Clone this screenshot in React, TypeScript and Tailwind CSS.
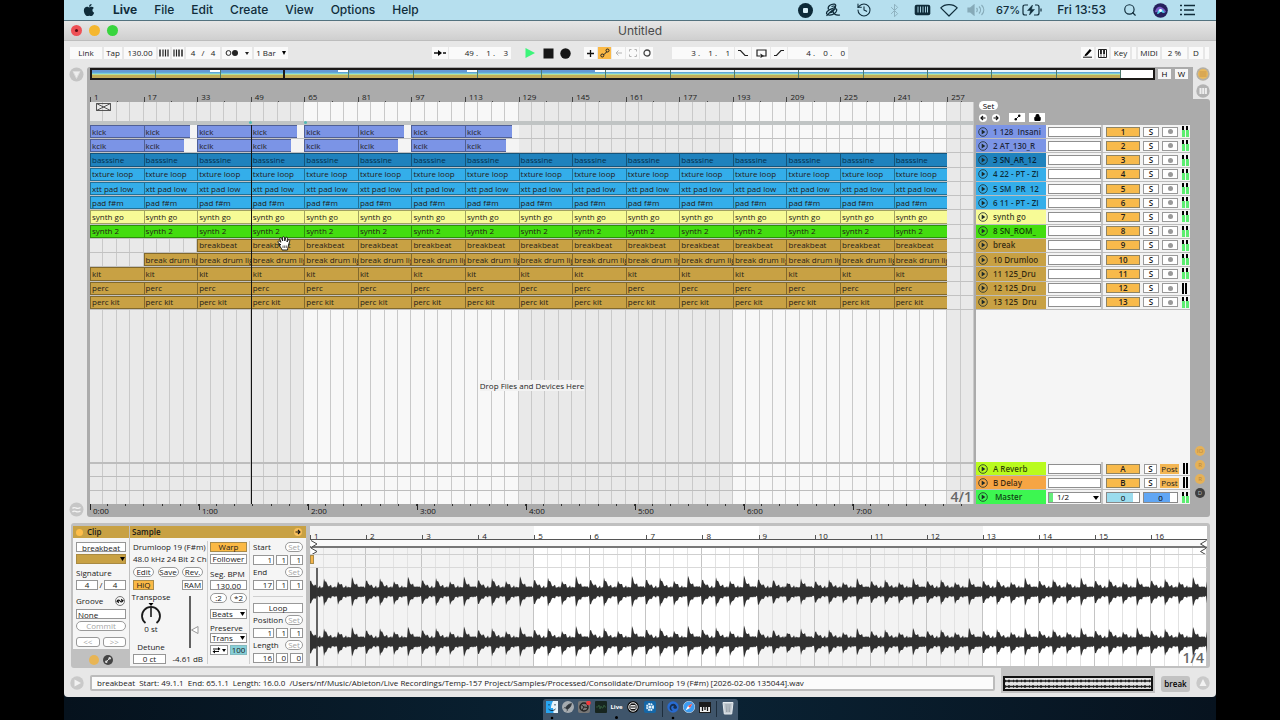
import React from "react";
import { FaApple } from "react-icons/fa";
import { History, Bluetooth, Search, Lock } from "lucide-react";

const BLUE = "bg-[#7b94e6]";
const TAN = "bg-[#c8a144]";
const SKY = "bg-[#34aeea]";

type Track = {
  header: string;
  color: string;
  clip: string;
  first: number;
  count: number;
  text?: string;
  shortBy?: number;
  idle?: boolean;
};

const tracks: Track[] = [
  { header: "1 128  Insani", color: BLUE, clip: "kick", first: 0, count: 8, shortBy: 1 },
  { header: "2 AT_130_R", color: BLUE, clip: "kcik", first: 0, count: 8, shortBy: 2 },
  { header: "3 SN_AR_12", color: "bg-[#1f82bd]", clip: "basssine", first: 0, count: 16, text: "text-[#06304d]" },
  { header: "4 22 - PT - ZI", color: SKY, clip: "txture loop", first: 0, count: 16 },
  { header: "5 SM  PR  12", color: SKY, clip: "xtt pad low", first: 0, count: 16 },
  { header: "6 11 - PT - ZI", color: SKY, clip: "pad f#m", first: 0, count: 16 },
  { header: "synth go", color: "bg-[#f7fb96]", clip: "synth go", first: 0, count: 16 },
  { header: "8 SN_ROM_", color: "bg-[#43dd0f]", clip: "synth 2", first: 0, count: 16 },
  { header: "break", color: TAN, clip: "breakbeat", first: 2, count: 14 },
  { header: "10 Drumloo", color: TAN, clip: "break drum lig", first: 1, count: 15 },
  { header: "11 125_Dru", color: TAN, clip: "kit", first: 0, count: 16 },
  { header: "12 125_Dru", color: TAN, clip: "perc", first: 0, count: 16, idle: true },
  { header: "13 125  Dru", color: TAN, clip: "perc kit", first: 0, count: 16 },
];

const range = (n: number) => Array.from({ length: n }, (_, i) => i);

function wavePath(width: number, bars: number, center: number): string {
  const up: string[] = [];
  const down: string[] = [];
  const peaks = [11, 12, 9, 13];
  const dips = [12, 13, 12, 13];
  const beat = width / bars / 4;
  for (let x = 0; x <= width; x += 1) {
    const phase = (x + 0.5) % beat;
    const index = Math.floor((x + 0.5) / beat) % 4;
    const local = Math.floor((x + 0.5) % (beat * 4));
    const bump = Math.abs(Math.sin(local * 2.3) * 2.2 + Math.sin(local * 1.1) * 1.2);
    const decay = Math.exp(-phase / 3.4);
    const top = 3 + bump + decay * (peaks[index] - 2);
    const low = 3 + bump * 0.7 + decay * (dips[index] - 2);
    up.push(`${x} ${(center - top).toFixed(1)}`);
    down.unshift(`${x} ${(center + low).toFixed(1)}`);
  }
  return `M${up.join("L")}L${down.join("L")}Z`;
}

const waveA = wavePath(897, 16, 24);
const waveB = wavePath(897, 16, 74);

function BarGrid() {
  return (
    <div className="absolute inset-0 grid grid-cols-[repeat(66,minmax(0,1fr))]" aria-hidden="true">
      {range(66).map((i) => (
        <div
          key={i}
          className={`border-r border-[#c9c9c9] ${Math.floor(i / 16) % 2 === 0 ? "bg-[#e9e9e9]" : "bg-[#f8f8f8]"}`}
        />
      ))}
    </div>
  );
}

function ToolBox({ className = "", label, children }: { className?: string; label?: string; children?: React.ReactNode }) {
  return (
    <button
      type="button"
      aria-label={label}
      className={`flex h-3 shrink-0 items-center justify-center whitespace-pre bg-[#fafafa] leading-none ${className}`}
    >
      {children}
    </button>
  );
}

function MenuBar() {
  return (
    <header className="flex h-[21px] items-center border-b border-[#53727f] bg-[#b6dfee] pl-[18px] pr-5 font-['Inter','Liberation_Sans',sans-serif] text-[12px] text-[#102c3a]">
      <FaApple className="mr-[17px] size-[14px]" />
      <nav className="flex flex-1 items-center gap-[17px]">
        <a href="#live" className="font-bold">Live</a>
        {["File", "Edit", "Create", "View", "Options", "Help"].map((item) => (
          <a key={item} href={`#${item.toLowerCase()}`} className="font-medium">{item}</a>
        ))}
      </nav>
      <div className="flex items-center">
        <svg className="mr-3 size-[15px]" viewBox="0 0 15 15">
          <circle cx="7.500" cy="7.500" r="7.500" fill="#0d2a38" />
          <rect x="5" y="5" width="5" height="5" rx="1" fill="#d8eff7" />
        </svg>
        <svg className="mr-[15px] h-[14px] w-4" viewBox="0 0 16 14" fill="none" stroke="#102c3a" strokeWidth="1.200">
          <path d="M3.500 6.500C2 3.500 6 .8 9.500 1.200c2.500.5 1 3.300-2 4.300C4.500 6.700 1 8 1.500 10.500c.7 2.500 5.500 2 8 0 2.500-2.200 3-4.700 1-4.700-2.500 0-6 3.700-9 7M6.500 3.500C9 2.500 11.500 3 10 5.500c-1.500 2.700-4 4.500-5.500 4.200M8 8.500c1 3.500 4 4 7 3.500" />
        </svg>
        <History className="mr-[15px] size-4" strokeWidth={1.6} />
        <Bluetooth className="mr-3 size-[15px] text-[#8fb3c1]" strokeWidth={1.6} />
        <svg className="mr-[9px] h-3 w-[17px]" viewBox="0 0 17 12">
          <rect x="0.700" y="0.700" width="15.600" height="10.600" rx="2" fill="#102c3a" />
          <path d="M4 2.500v6M6.500 2.500v6M9 2.500v6M11.500 2.500v6M13.500 2.500v6" stroke="#b6dfee" strokeWidth="0.900" />
        </svg>
        <svg className="mr-[9px] h-[14px] w-[18px]" viewBox="0 0 18 14" fill="none" stroke="#102c3a" strokeWidth="1.200">
          <path d="M.8 4.800C5 .5 13 .5 17.200 4.800L9 13z" strokeLinejoin="round" />
        </svg>
        <svg className="mr-[10px] h-3 w-[19px]" viewBox="0 0 19 12" fill="none" stroke="#86aab8" strokeWidth="1.200">
          <path d="M1 4h2.500L7 1v10L3.500 8H1z" fill="#86aab8" />
          <path d="M9.500 4c1 1 1 3 0 4M12 2.500c2 2 2 5 0 7M14.500 1c3 3 3 7 0 10" />
        </svg>
        <span className="text-[11px] font-medium">67%</span>
        <svg className="ml-[2px] mr-[14px] h-3 w-[21px]" viewBox="0 0 21 12" fill="none" stroke="#102c3a" strokeWidth="1.200">
          <path d="M6 1H3Q1 1 1 3v6q0 2 2 2h2M13 1h2q2 0 2 2v6q0 2-2 2h-3M19 4.500v3" />
          <path d="M10.500 1 5.500 6.500h3L7.500 11l5-5.500h-3z" fill="#102c3a" strokeWidth=".5" />
        </svg>
        <span className="font-medium">Fri 13:53</span>
        <Search className="ml-[17px] mr-4 size-[14px]" strokeWidth={2} />
        <svg className="mr-[11px] size-[15px]" viewBox="0 0 15 15">
          <circle cx="7.500" cy="7.500" r="7.300" fill="#26205c" />
          <path d="M2 9c1-5 4-6 6-5s4 2 5 5c-3 1-3-2-5-2s-3 3-6 2z" fill="#7a5bc5" />
          <path d="M4 11c1-4 2-5 4-5s3 3 4 4c-3 0-3-1-4-1s-2 2-4 2z" fill="#55d4ef" />
          <circle cx="7.500" cy="7.500" r="1.400" fill="#fff" />
        </svg>
        <svg className="h-3 w-[17px]" viewBox="0 0 17 12" stroke="#102c3a" strokeWidth="1.600">
          <path d="M5 1.500h11M5 6h10M5 10.500h11M1 1.500h2M1 6h2M1 10.500h2" />
        </svg>
      </div>
    </header>
  );
}

function Transport() {
  return (
    <div className="flex h-[26px] items-center bg-[#e7e7e7] pb-[2px] pl-[6px] pr-[7px] text-[8px] text-[#222]">
      <div className="flex w-[362px] shrink-0 items-center gap-[2px]">
        <ToolBox className="w-8">Link</ToolBox>
        <ToolBox className="w-[18px]">Tap</ToolBox>
        <ToolBox className="w-8">130.00</ToolBox>
        <ToolBox className="w-3" label="Nudge down">
          <svg className="size-[10px]" viewBox="0 0 10 10" stroke="#222"><path d="M1 1.500v7" strokeWidth="1.500" /><path d="M4 1.500v7M6.500 1.500v7M9 1.500v7" strokeWidth="1.200" /></svg>
        </ToolBox>
        <ToolBox className="w-3" label="Nudge up">
          <svg className="size-[10px]" viewBox="0 0 10 10" stroke="#222"><path d="M1 1.500v7M3.500 1.500v7" strokeWidth="1.200" /><path d="M6 1.500v7M9 1.500v7" strokeWidth="1.500" /></svg>
        </ToolBox>
        <ToolBox className="w-[34px]">4   /   4</ToolBox>
        <ToolBox className="w-[30px]" label="Metronome">
          <svg className="h-2 w-6" viewBox="0 0 24 8"><circle cx="3.500" cy="4" r="2.400" fill="none" stroke="#222" /><circle cx="10" cy="4" r="3" fill="#222" /><path d="M20 3h4l-2 3z" fill="#222" /></svg>
        </ToolBox>
        <ToolBox className="w-[34px] gap-[6px]">1 Bar<svg className="h-1 w-1" viewBox="0 0 4 4"><path d="M0 0h4L2 4z" /></svg></ToolBox>
      </div>
      <div className="flex w-60 shrink-0 items-center gap-px">
        <ToolBox className="w-4" label="Follow">
          <svg className="h-[6px] w-3" viewBox="0 0 12 6"><path d="M0 3h4M9 3h3" stroke="#111" strokeWidth="1.300" /><path d="M4 0l4 3-4 3z" /></svg>
        </ToolBox>
        <ToolBox className="w-[62px] justify-end! pr-[3px]">49 .    1 .    3</ToolBox>
        <div className="ml-3 flex items-center gap-[3px]">
          <button type="button" aria-label="Play" className="w-4"><svg className="size-3" viewBox="0 0 12 12"><path d="M1.500 1 11 6l-9.500 5z" fill="#3cf57a" /></svg></button>
          <button type="button" aria-label="Stop" className="w-[14px]"><svg className="size-[11px]" viewBox="0 0 11 11"><path d="M.5.500h10v10H.5z" fill="#161616" /></svg></button>
          <button type="button" aria-label="Record" className="w-[14px]"><svg className="size-[11px]" viewBox="0 0 11 11"><circle cx="5.500" cy="5.500" r="5.200" fill="#161616" /></svg></button>
        </div>
        <ToolBox className="ml-[9px] w-[13px]" label="Overdub"><svg className="size-[7px]" viewBox="0 0 7 7"><path d="M3.500 0v7M0 3.500h7" stroke="#111" strokeWidth="1.300" /></svg></ToolBox>
        <ToolBox className="w-[13px] bg-[#fbb945]!" label="Automation arm"><svg className="size-[10px]" viewBox="0 0 10 10" fill="none" stroke="#222"><circle cx="2.300" cy="7.500" r="1.500" /><circle cx="7.500" cy="2.500" r="1.500" /><path d="M3.300 6.500c1-.5 2.200-.5 3.300-2.800" /></svg></ToolBox>
        <ToolBox className="w-[13px]" label="Re-enable automation"><svg className="h-[6px] w-[7px]" viewBox="0 0 7 6" fill="none" stroke="#b4b4b4"><path d="M7 3H1M3.500.500 1 3l2.500 2.500" /></svg></ToolBox>
        <ToolBox className="w-[13px]" label="Capture"><svg className="size-2" viewBox="0 0 8 8" fill="none" stroke="#b4b4b4"><path d="M.5 2.500v-2h2M5.500.500h2v2M7.500 5.500v2h-2M2.500 7.500h-2v-2" /></svg></ToolBox>
        <ToolBox className="w-[13px]" label="Session record"><svg className="size-2" viewBox="0 0 8 8"><circle cx="4" cy="4" r="3" fill="none" stroke="#444" strokeWidth="1.300" /></svg></ToolBox>
      </div>
      <div className="flex flex-1 items-center gap-px">
        <ToolBox className="w-[62px] justify-end! pr-1">3 .    1 .    1</ToolBox>
        <ToolBox className="w-4" label="Punch in"><svg className="h-2 w-[10px]" viewBox="0 0 10 8" fill="none" stroke="#222" strokeWidth="1.200"><path d="M0 1.500h2.500l4.500 5h3" /></svg></ToolBox>
        <ToolBox className="w-[18px]" label="Loop"><svg className="h-[9px] w-[11px]" viewBox="0 0 11 9" fill="none" stroke="#222" strokeWidth="1.200"><path d="M4 7H1V1h9v6H7" /><path d="M4.500 4.500 8 7 4.500 9z" fill="#222" stroke="none" /></svg></ToolBox>
        <ToolBox className="w-4" label="Punch out"><svg className="h-2 w-[10px]" viewBox="0 0 10 8" fill="none" stroke="#222" strokeWidth="1.200"><path d="M0 6.500h2.500l4.500-5h3" /></svg></ToolBox>
        <ToolBox className="w-[60px] justify-end! pr-[3px]">4 .    0 .    0</ToolBox>
      </div>
      <div className="flex items-center gap-[2px]">
        <ToolBox className="w-[13px]" label="Draw mode"><svg className="size-[10px]" viewBox="0 0 10 10"><path d="M2 6.500 6.800 1l1.800 1.600L4 7.500l-2.500.7z" /><path d="M0 9.200h9" stroke="#111" /></svg></ToolBox>
        <ToolBox className="w-[13px]" label="Computer keyboard"><svg className="size-[9px]" viewBox="0 0 9 9"><path d="M.5.500h8v8h-8z" fill="#fff" stroke="#222" /><path d="M3 1v7M6 1v7" stroke="#222" strokeWidth=".7" /><path d="M2.200 1h1.500v4H2.200zM5.300 1h1.500v4H5.300z" /></svg></ToolBox>
        <ToolBox className="w-[19px]">Key</ToolBox>
        <ToolBox className="w-1" label="Key activity" />
        <ToolBox className="w-[22px]">MIDI</ToolBox>
        <ToolBox className="w-[25px]">2 %</ToolBox>
        <ToolBox className="w-[14px]">D</ToolBox>
        <ToolBox className="w-1" label="MIDI activity" />
      </div>
    </div>
  );
}

function Overview() {
  return (
    <div className="relative h-3 min-w-0 flex-1 border-2 border-[#1c1a18] bg-white">
      <div className="grid h-full grid-cols-[repeat(66,minmax(0,1fr))]">
        {range(16).map((i) => (
          <div key={i} className="col-span-4 flex flex-col border-r border-[#4f7a6c]">
            <div className={`h-[2px] ${i < 8 ? "bg-[#6597d4]" : "bg-[#eef6fb]"} ${i < 8 && i % 2 === 1 ? "mr-[10px]" : ""}`} />
            <div className="h-px bg-[#5fa9d4]" />
            <div className="h-px bg-[#7ec8e0]" />
            <div className="h-px bg-[#b8de8e]" />
            <div className="flex-1 bg-[#c2ac59]" />
          </div>
        ))}
      </div>
      <div className="absolute inset-y-0 left-[18%] w-[2px] bg-[#1c1a18]" />
    </div>
  );
}

function TrackLane({ track }: { track: Track }) {
  return (
    <div className="grid min-h-0 grid-cols-[repeat(66,minmax(0,1fr))] border-b border-[#c2c2c2]">
      {track.first === 1 && <div className="col-span-4" />}
      {track.first === 2 && <div className="col-span-8" />}
      {range(track.count).map((i) => {
        const short = track.shortBy !== undefined && i % 2 === 1;
        return (
          <div key={i} className={`col-span-4 min-w-0 ${short ? "bg-[#f4f4f4]" : ""} ${short ? (track.shortBy === 1 ? "pr-[7px]" : "pr-[13px]") : ""}`}>
            <div
              className={`flex h-full items-center overflow-hidden whitespace-nowrap border-y border-l border-black/35 pl-px text-[8px] font-medium leading-none ${track.color} ${track.text ?? "text-[#242018]"}`}
            >
              {track.clip}
            </div>
          </div>
        );
      })}
    </div>
  );
}

function PlayCircle() {
  return (
    <svg className="size-[10px] shrink-0" viewBox="0 0 10 10">
      <circle cx="5" cy="5" r="4.300" fill="none" stroke="#1c2a2a" strokeOpacity=".8" />
      <path d="M3.700 2.500 7.300 5 3.700 7.500z" fill="#1c2a2a" />
    </svg>
  );
}

function Meter({ idle }: { idle?: boolean }) {
  return (
    <div className="flex h-[11px] w-[7px] gap-px" aria-hidden="true">
      {range(2).map((i) => (
        <div key={i} className={`flex flex-col ${idle ? "w-[2px]" : "w-[3px]"}`}>
          <div className={`bg-black ${idle ? "h-full" : "h-1 w-[2px]"}`} />
          {!idle && <div className="flex-1 bg-[#5bee70]" />}
        </div>
      ))}
    </div>
  );
}

function HeaderRow({ name, color, id, ret, idle }: { name: string; color: string; id: string; ret?: boolean; idle?: boolean }) {
  return (
    <div className="flex min-h-0 items-stretch border-b border-[#bcbcbc] bg-[#f3f3f3] text-[8px] leading-none text-[#1c1c1c]">
      <button type="button" className={`flex w-[70px] items-center gap-[5px] overflow-hidden whitespace-pre pl-[2px] font-semibold text-black/75 ${color}`}>
        <PlayCircle />
        {name}
      </button>
      <div className="flex w-[57px] items-center border-r-2 border-[#c4c4c4] pl-[2px]">
        <input aria-label={`${name} device`} className="h-[10px] w-[53px] border border-[#8f8f8f] bg-white px-1" />
      </div>
      <div className="flex flex-1 items-center pl-[3px]">
        <button type="button" className="h-[10px] w-[34px] border border-[#8f8463] bg-[#f8ba4b] font-semibold leading-[8px]">{id}</button>
        <button type="button" className={`h-[10px] border border-[#999] bg-white font-semibold leading-[8px] ${ret ? "ml-1 w-[13px]" : "ml-[3px] w-4"}`}>S</button>
        {ret ? (
          <button type="button" className="ml-[3px] h-[10px] w-[19px] bg-[#f3b653] text-center font-medium leading-[10px]">Post</button>
        ) : (
          <button type="button" aria-label={`Arm ${name}`} className="ml-[3px] flex h-[10px] w-4 items-center justify-center border border-[#999] bg-white">
            <span className="size-[5px] rounded-full bg-[#999]" />
          </button>
        )}
        <div className="ml-1"><Meter idle={idle} /></div>
      </div>
    </div>
  );
}

function Hand() {
  return (
    <svg className="absolute left-[21.200%] top-[111px] h-[15px] w-[14px]" viewBox="0 0 14 15" aria-hidden="true">
      <path
        d="M4 9 1 6.500C.5 5 2 4.600 3 5.500l1 .8L2.800 3C2.500 1.500 4.200 1.200 4.600 2.500L5.700 5 5.500 1.800C5.600.3 7.400.3 7.500 1.800L7.800 5 8.600 2c.4-1.300 2-1 1.900.4L10 6l1-1.800c.8-1 2.200-.3 1.700 1L11.500 9c-.3 2-.8 2.500-1 5H5c-.3-2-1.200-2-2.200-4L1.500 8z"
        fill="#fff"
        stroke="#111"
        strokeWidth=".9"
      />
      <path d="M6 9.500v2.500M7.700 9.500v2.500M9.300 9.500v2.500" stroke="#222" strokeWidth=".7" />
    </svg>
  );
}

function Timeline() {
  return (
    <div className="flex min-w-0 flex-1 flex-col">
      <div className="grid h-[22px] grid-cols-[repeat(66,minmax(0,1fr))] items-end text-[8px] font-medium leading-none text-[#1b1b1b]">
        {range(17).map((i) => (
          <div key={i} className={`relative flex h-[5px] border-l border-[#444] ${i < 16 ? "col-span-4" : "col-span-2"}`}>
            <span className="absolute bottom-px left-[3px]">{i * 16 + 1}</span>
            <span className="absolute bottom-0 left-1/2 h-px w-px bg-[#444]" />
          </div>
        ))}
      </div>
      <div className="relative h-[19px]">
        <BarGrid />
        <svg className="absolute left-[6px] top-px h-2 w-[15px]" viewBox="0 0 15 8" fill="none" stroke="#444">
          <path d="M.5.500h14v7H.5zM.5.500l14 7M.5 7.500l14-7" strokeWidth=".9" />
        </svg>
      </div>
      <div className="h-1 bg-[#c0c4c4]" />
      <div className="relative flex flex-1 flex-col">
        <BarGrid />
        <div className="relative grid h-[185px] grid-rows-[repeat(13,minmax(0,1fr))]">
          {tracks.map((track) => (
            <TrackLane key={track.header} track={track} />
          ))}
        </div>
        <div className="relative flex flex-1 items-center justify-center">
          <p className="text-[8px] font-medium leading-3 text-[#222]"><span className="bg-[#f2f2f2]">Drop Files and Devices Here</span></p>
        </div>
        <div className="relative grid h-[42px] grid-rows-3">
          {range(3).map((i) => (
            <div key={i} className={`border-[#bdbdbd] ${i === 0 ? "border-t-2" : "border-t"}`} />
          ))}
        </div>
        <span className="absolute bottom-0 right-[2px] text-[14px] font-semibold leading-[14px] text-[#666]">4/1</span>
        <div className="absolute inset-y-0 left-[18.180%] w-px bg-[#141414]" />
        <span className="absolute -top-1 left-[18%] size-[3px] rounded-full bg-[#51b9b4]" />
        <span className="absolute -top-1 left-[24.200%] size-[3px] rounded-full bg-[#51b9b4]" />
        <Hand />
      </div>
      <div className="flex h-[13px] overflow-hidden text-[8px] font-medium leading-none text-[#161616]">
        {range(9).map((i) => (
          <div key={i} className="relative grid w-[12.330%] shrink-0 grid-cols-6">
            {range(6).map((j) => (
              <span key={j} className="h-[2px] border-r border-[#333]" />
            ))}
            {i < 8 && (
              <>
                <span className="absolute left-0 top-0 h-[6px] w-px bg-[#222]" />
                <span className="absolute left-[3px] top-[3px]">{i}:00</span>
              </>
            )}
          </div>
        ))}
      </div>
    </div>
  );
}

function TrackHeaders() {
  return (
    <div className="flex w-[214px] shrink-0 flex-col">
      <div className="flex h-[45px] flex-col pt-[21px] text-[8px] leading-none">
        <button type="button" className="ml-[3px] h-[9px] w-[19px] rounded-full bg-white font-medium leading-[9px]">Set</button>
        <div className="mt-[3px] flex items-center pl-[3px]">
          <button type="button" aria-label="Previous locator" className="size-2 rounded-full bg-white"><svg viewBox="0 0 8 8"><path d="M6.500 4H2M4 2 2 4l2 2" fill="none" stroke="#111" strokeWidth="1.200" /></svg></button>
          <button type="button" aria-label="Next locator" className="ml-[5px] size-2 rounded-full bg-white"><svg viewBox="0 0 8 8"><path d="M1.500 4H6M4 2l2 2-2 2" fill="none" stroke="#111" strokeWidth="1.200" /></svg></button>
          <button type="button" aria-label="Automation mode" className="ml-[9px] flex h-[9px] w-4 items-center justify-center bg-white"><svg className="size-[7px]" viewBox="0 0 8 8"><circle cx="2" cy="6" r="1.400" /><circle cx="6" cy="2" r="1.400" /><path d="M2 6 6 2" stroke="#111" /></svg></button>
          <button type="button" aria-label="Lock envelopes" className="ml-1 flex h-[9px] w-4 items-center justify-center bg-white"><Lock className="size-[7px] fill-black" strokeWidth={4} /></button>
        </div>
      </div>
      <div className="grid h-[185px] grid-rows-[repeat(13,minmax(0,1fr))]">
        {tracks.map((t, i) => (
          <HeaderRow key={t.header} name={t.header} color={t.color} id={String(i + 1)} idle={t.idle} />
        ))}
      </div>
      <div className="flex-1 bg-[#f5f5f5]" />
      <div className="grid h-[42px] grid-rows-3">
        <HeaderRow name="A Reverb" color="bg-[#b9fb1e]" id="A" ret idle />
        <HeaderRow name="B Delay" color="bg-[#f6a544]" id="B" ret idle />
        <div className="flex min-h-0 bg-[#f3f3f3] text-[8px] leading-none">
          <button type="button" className="flex w-[70px] items-center gap-[7px] bg-[#3df651] pl-[2px] font-semibold text-black/75"><PlayCircle />Master</button>
          <div className="flex w-[57px] items-center border-r-2 border-[#c4c4c4] pl-[2px]">
            <div className="relative flex h-[11px] w-[53px] items-center border border-[#8f8f8f] bg-white">
              <span className="h-[9px] w-1 bg-[#66ec7b]" />
              <select aria-label="Cue output" className="h-full flex-1 appearance-none bg-transparent pl-1 font-medium leading-none"><option>1/2</option></select>
              <svg className="absolute right-px top-[3px] h-1 w-[6px]" viewBox="0 0 6 4"><path d="M0 0h6L3 4z" /></svg>
            </div>
          </div>
          <div className="flex flex-1 items-center pl-[3px]">
            <button type="button" className="h-[11px] w-[34px] border border-[#888] bg-linear-to-r from-[#9bdcee] from-80% to-white to-80% leading-[9px]">0</button>
            <button type="button" className="ml-[3px] h-[11px] w-[35px] border border-[#888] bg-linear-to-r from-[#60a6f4] from-80% to-white to-80% leading-[9px]">0</button>
            <div className="ml-1"><Meter /></div>
          </div>
        </div>
      </div>
      <div className="h-[13px]" />
    </div>
  );
}

function Arrangement() {
  return (
    <section className="flex flex-1" aria-label="Arrangement">
      <div className="flex w-[23px] flex-col items-center justify-between pl-[2px]">
        <svg className="size-[15px]" viewBox="0 0 15 15"><circle cx="7.500" cy="7.500" r="7" fill="#c4c4c4" /><path d="M4 4.500h7l-3.500 7z" fill="#eee" stroke="#ddd" /></svg>
        <svg className="size-[15px]" viewBox="0 0 15 15"><circle cx="7.500" cy="7.500" r="7" fill="#c6c6c6" /><path d="M3.500 6.500c2-3 4 2 8-1M3.500 10c2-3 4 2 8-1" fill="none" stroke="#f2f2f2" strokeWidth="1.400" /></svg>
      </div>
      <div className="flex min-w-0 flex-1 flex-col rounded-l-[3px] bg-[#ababab] px-[3px] pt-px">
        <div className="flex items-center">
          <Overview />
          <div className="flex w-[35px] gap-1 pl-[3px] text-[8px] font-medium leading-none">
            <button type="button" className="h-[10px] w-[13px] bg-[#f6f6f6] leading-[10px]">H</button>
            <button type="button" className="h-[10px] w-[13px] bg-[#f6f6f6] leading-[10px]">W</button>
          </div>
        </div>
        <div className="flex flex-1 gap-[2px]">
          <Timeline />
          <TrackHeaders />
        </div>
      </div>
      <div className="flex w-[23px] flex-col bg-[#e7e7e7]">
        <div className="flex h-8 flex-col items-center gap-[3px] pr-[3px]">
          <svg className="size-[14px]" viewBox="0 0 14 14"><circle cx="7" cy="7" r="6.700" fill="#b5b0a4" /><circle cx="7" cy="7" r="5" fill="#e9b95c" /><path d="M3.500 5h7M3.500 7h7M3.500 9h7" stroke="#c9974a" /></svg>
          <svg className="size-[14px]" viewBox="0 0 14 14"><circle cx="7" cy="7" r="6.700" fill="#b3b3b3" /><path d="M3.500 4h2v6h-2zM6.200 4h2v6h-2zM8.900 4h2v6h-2z" fill="#eee" /></svg>
        </div>
        <div className="mr-[6px] flex flex-1 flex-col items-center justify-end gap-1 rounded-r-[3px] bg-[#ababab] pb-[19px] pr-[3px]">
          {["IO", "R", "R"].map((letter, i) => (
            <button key={i} type="button" aria-label={`Show section ${i + 1}`} className="size-[10px] rounded-full bg-[#e5b158] text-[6px] leading-none text-[#b8873a]">{letter}</button>
          ))}
          <button type="button" className="size-[10px] rounded-full bg-[#3f3f3f] text-[6px] leading-none text-[#bbb]">D</button>
        </div>
      </div>
    </section>
  );
}

function Field({ label, value, align = "text-center", className = "" }: { label: string; value: string; align?: string; className?: string }) {
  return (
    <input
      aria-label={label}
      defaultValue={value}
      className={`h-[10px] min-w-0 border border-[#969696] bg-white px-px leading-none ${align} ${className}`}
    />
  );
}

function Pill({ children, dim, className = "" }: { children: React.ReactNode; dim?: boolean; className?: string }) {
  return (
    <button
      type="button"
      className={`h-[10px] rounded-full border border-[#999] bg-white leading-[8px] ${dim ? "text-[#a5a5a5]" : ""} ${className}`}
    >
      {children}
    </button>
  );
}

function Drop({ label, value, className = "" }: { label: string; value: string; className?: string }) {
  return (
    <div className={`relative h-[10px] ${className}`}>
      <select aria-label={label} className="block h-full w-full appearance-none border border-[#969696] bg-white pl-px leading-none">
        <option>{value}</option>
      </select>
      <svg className="absolute right-[2px] top-[3px] h-1 w-[5px]" viewBox="0 0 5 4"><path d="M0 0h5L2.500 4z" /></svg>
    </div>
  );
}

function Triple({ label, values }: { label: string; values: string[] }) {
  return (
    <div className="flex h-[13px] items-center gap-[2px]">
      <Field label={`${label} bar`} value={values[0]} align="text-right" className="w-[21px]" />
      <Field label={`${label} beat`} value={values[1]} align="text-right" className="w-3" />
      <Field label={`${label} sixteenth`} value={values[2]} align="text-right" className="w-[13px]" />
    </div>
  );
}

function SetRow({ label }: { label: string }) {
  return (
    <div className="flex h-3 items-center justify-between">
      <span>{label}</span>
      <Pill dim className="w-[18px]">Set</Pill>
    </div>
  );
}

function ClipBox() {
  return (
    <div className="flex w-14 shrink-0 flex-col justify-between">
      <div className="bg-[#f5f5f5] pb-[2px]">
        <h2 className="flex h-3 items-center gap-1 bg-[#c8a144] pl-[3px] font-semibold"><span className="size-[7px] rounded-full bg-[#ffbe4a]" />Clip</h2>
        <div className="flex flex-col px-[3px] pt-[3px]">
          <Field label="Clip name" value="breakbeat" className="my-px" />
          <div className="relative my-px h-[10px]">
            <select aria-label="Clip colour" className="block h-full w-full appearance-none border border-[#a98a42] bg-[#c8a144]"><option></option></select>
            <svg className="absolute right-px top-[3px] h-1 w-[5px]" viewBox="0 0 5 4"><path d="M0 0h5L2.500 4z" /></svg>
          </div>
          <span className="mt-[2px] h-3 leading-3">Signature</span>
          <div className="flex h-[11px] items-center justify-between">
            <Field label="Numerator" value="4" className="w-[22px]" />/
            <Field label="Denominator" value="4" className="w-[22px]" />
          </div>
          <div className="mt-[5px] flex h-3 items-center justify-between pr-px">
            Groove
            <svg className="size-[10px]" viewBox="0 0 10 10" fill="none" stroke="#777"><circle cx="5" cy="5" r="4.500" /><path d="M2 5.500c.5-2 2-2 3-.5s2 1.500 3-.5M3.500 7 3 5l-1.500 1M6.500 3 7 5l1.500-1" stroke="#111" strokeWidth="1.100" /></svg>
          </div>
          <input aria-label="Groove" defaultValue="None" className="my-[2px] h-[10px] border border-[#969696] bg-white pl-px leading-none" />
          <Pill dim>Commit</Pill>
          <div className="mt-[6px] flex gap-[3px]">
            <Pill dim className="flex-1 rounded-[3px]!">&lt;&lt;</Pill>
            <Pill dim className="flex-1 rounded-[3px]!">&gt;&gt;</Pill>
          </div>
        </div>
      </div>
      <div className="flex h-[13px] items-center justify-center gap-1">
        <span className="size-[10px] rounded-full bg-[#e8b555]" />
        <svg className="size-[10px]" viewBox="0 0 10 10"><circle cx="5" cy="5" r="5" fill="#444" /><path d="M3 7 7 3" stroke="#ddd" /><circle cx="3.300" cy="6.700" r="1.200" fill="#ddd" /><circle cx="6.700" cy="3.300" r="1.200" fill="#ddd" /></svg>
      </div>
    </div>
  );
}

function SampleBox() {
  return (
    <div className="flex w-[176px] shrink-0 flex-col bg-[#f5f5f5]">
      <h2 className="flex h-3 items-center justify-between bg-[#c8a144] pl-[2px] pr-1 font-semibold">
        Sample
        <svg className="size-2" viewBox="0 0 8 8"><circle cx="4" cy="4" r="4" fill="#f8bf5c" /><path d="M1.500 4H6M4 2l2 2-2 2" fill="none" stroke="#111" strokeWidth="1.100" /></svg>
      </h2>
      <div className="flex flex-1 px-[3px] pt-[3px]">
        <div className="flex w-[75px] flex-col">
          <span className="h-3 whitespace-nowrap leading-3">Drumloop 19 (F#m)</span>
          <span className="h-3 whitespace-nowrap leading-3">48.0 kHz 24 Bit 2 Ch</span>
          <div className="flex h-[13px] items-center justify-between pr-1">
            <Pill className="w-[21px]">Edit</Pill>
            <Pill className="w-[21px]">Save</Pill>
            <Pill className="w-[21px]">Rev.</Pill>
          </div>
          <div className="flex h-[13px] items-center justify-between pr-1">
            <button type="button" className="h-[10px] w-[21px] border border-[#a88b4a] bg-[#fbb945] leading-[8px]">HiQ</button>
            <button type="button" className="h-[10px] w-[21px] border border-[#999] bg-white leading-[8px]">RAM</button>
          </div>
          <div className="flex flex-1 justify-between">
            <div className="flex w-9 flex-col items-center">
              <span className="h-3 leading-3">Transpose</span>
              <svg className="h-[22px] w-6" viewBox="0 0 24 22"><path d="M6.500 20A9 9 0 1 1 17.500 20" fill="none" stroke="#1b1b1b" strokeWidth="1.800" /><path d="M12 4v10" stroke="#1b1b1b" strokeWidth="1.600" /><path d="M9.500 0h5L12 3z" /></svg>
              <span className="h-[10px] leading-[8px]">0 st</span>
              <span className="mt-[7px] h-[10px] leading-[10px]">Detune</span>
            </div>
            <svg className="mt-[5px] h-[54px] w-[22px]" viewBox="0 0 22 54"><path d="M5 0v52" stroke="#111" strokeWidth="1.300" /><path d="M6.500 34 13 30.500v7z" fill="#fff" stroke="#999" /></svg>
          </div>
          <div className="mb-[2px] flex h-[11px] items-center justify-between pr-1">
            <Field label="Detune" value="0 ct" className="w-[33px]" />
            <span className="whitespace-nowrap">-4.61 dB</span>
          </div>
        </div>
        <div className="mb-[2px] flex w-[43px] flex-col border-x border-[#cfcfcf] px-[2px]">
          <button type="button" className="my-px h-[10px] border border-[#a88b4a] bg-[#fbb945] leading-[8px]">Warp</button>
          <button type="button" className="my-px h-[10px] whitespace-nowrap border border-[#999] bg-white leading-[8px]">Follower</button>
          <span className="mt-[3px] h-3 whitespace-nowrap leading-3">Seg. BPM</span>
          <Field label="Segment BPM" value="130.00" />
          <div className="mt-[3px] flex justify-between">
            <Pill className="w-[17px]">:2</Pill>
            <Pill className="w-[17px]">*2</Pill>
          </div>
          <Drop label="Warp mode" value="Beats" className="mt-[6px]" />
          <span className="mt-1 h-[10px] leading-[10px]">Preserve</span>
          <Drop label="Preserve transients" value="Trans" />
          <div className="mt-[2px] flex h-[10px] justify-between">
            <button type="button" aria-label="Transient loop mode" className="w-[18px] border border-[#999] bg-white"><svg className="h-2 w-4" viewBox="0 0 16 8"><path d="M2 3h6M3 5.500h5" stroke="#111" /><path d="M7 1l2.500 2L7 4.500zM4 4 1.500 5.500 4 7.500zM11 3h4l-2 3z" /></svg></button>
            <button type="button" className="w-[17px] border border-[#83b9be] bg-[#86cfd8] leading-[8px]">100</button>
          </div>
        </div>
        <div className="flex w-[53px] flex-col pl-[3px]">
          <SetRow label="Start" />
          <Triple label="Start" values={["1", "1", "1"]} />
          <SetRow label="End" />
          <Triple label="End" values={["17", "1", "1"]} />
          <div className="my-[5px] h-px bg-[#cfcfcf]" />
          <button type="button" className="my-px h-[10px] border border-[#999] bg-white leading-[8px]">Loop</button>
          <SetRow label="Position" />
          <Triple label="Position" values={["1", "1", "1"]} />
          <SetRow label="Length" />
          <Triple label="Length" values={["16", "0", "0"]} />
        </div>
      </div>
    </div>
  );
}

function WaveView() {
  return (
    <div className="relative flex min-w-0 flex-1 flex-col bg-white">
      <div className="absolute inset-0 grid grid-cols-[repeat(16,minmax(0,1fr))]" aria-hidden="true">
        {range(16).map((i) => (
          <div key={i} className={Math.floor(i / 4) % 2 === 0 ? "bg-[#f3f3f3]" : "bg-white"} />
        ))}
      </div>
      <div className="relative grid h-[14px] grid-cols-[repeat(16,minmax(0,1fr))] items-end border-b border-[#555]">
        {range(16).map((i) => (
          <div key={i} className="relative h-1 border-l border-[#555]">
            <span className="absolute bottom-0 left-[3px] leading-[6px]">{i + 1}</span>
          </div>
        ))}
      </div>
      <div className="relative flex h-2 justify-between border-b-2 border-[#777] bg-[#fafafa]">
        <svg className="h-[15px] w-2 shrink-0" viewBox="0 0 8 15" fill="#fff" stroke="#444"><path d="M1 .500 7 4 1 7.500M1 8l6 3.500L1 15" /></svg>
        <svg className="h-[15px] w-2 shrink-0" viewBox="0 0 8 15" fill="#fff" stroke="#444"><path d="M7.500.500 1.500 4l6 3.500M7.500 8l-6 3.500 6 3.500" /></svg>
      </div>
      <div className="relative flex flex-1 flex-col">
        <div className="absolute inset-0 grid grid-cols-[repeat(64,minmax(0,1fr))]" aria-hidden="true">
          {range(64).map((i) => (
            <div key={i} className={`border-r ${i % 4 === 3 ? "border-[#c4c4c4]" : "border-[#e2e2e2]"}`} />
          ))}
        </div>
        <div className="relative h-[7px] border-b border-[#cfcfcf]" />
        <div className="relative h-[13px] border-b border-[#d9d9d9]"><span className="block h-[9px] w-1 border border-[#a88b4a] bg-[#f5b44b]" /></div>
        <svg className="relative min-h-0 w-full flex-1" viewBox="0 0 897 98" preserveAspectRatio="none" role="img" aria-label="Waveform">
          <path d={waveA} fill="#303030" />
          <path d={waveB} fill="#303030" />
          <path d="M7 0v98" stroke="#333" strokeWidth="1.500" />
        </svg>
      </div>
      <span className="absolute bottom-px right-[3px] text-[14px] font-semibold leading-[14px] text-[#666]">1/4</span>
    </div>
  );
}

function StatusBar() {
  return (
    <footer className="flex h-[29px] items-start px-[6px] text-[8px]">
      <svg className="mt-2 size-[14px]" viewBox="0 0 14 14"><circle cx="7" cy="7" r="6.700" fill="#c9c9c9" /><path d="M4.500 3.500 11 7l-6.500 3.500z" fill="#f2f2f2" /></svg>
      <p className="ml-[6px] mt-[7px] h-4 min-w-0 flex-1 whitespace-pre rounded-[2px] border-2 border-[#bcbcbc] bg-[#fbfbfb] pl-[5px] font-medium leading-3 text-[#1a1a1a]">
        breakbeat  Start: 49.1.1  End: 65.1.1  Length: 16.0.0  /Users/nf/Music/Ableton/Live Recordings/Temp-157 Project/Samples/Processed/Consolidate/Drumloop 19 (F#m) [2026-02-06 135044].wav
      </p>
      <div className="ml-[6px] bg-[#c2c2c2] px-[2px] pb-[2px] pt-2">
        <svg className="h-[15px] w-[150px]" viewBox="0 0 150 15">
          <path d="M1 1h148v13H1z" fill="#e4e4e4" stroke="#111" strokeWidth="2" />
          <path d="M2 5h146M2 10.500h146" stroke="#222" strokeWidth="1.600" />
          <path d="M2 5h146M2 10.500h146" stroke="#222" strokeWidth="2.600" strokeDasharray="1 2 2 3" />
        </svg>
      </div>
      <button type="button" className="ml-[6px] mt-2 h-4 w-[29px] rounded-[3px] bg-[#c2c2c2] font-semibold leading-4">break</button>
      <svg className="ml-[6px] mt-2 size-[14px]" viewBox="0 0 14 14"><circle cx="7" cy="7" r="6.700" fill="#c9c9c9" /><path d="M7 3l3.500 7h-7z" fill="#f2f2f2" /></svg>
    </footer>
  );
}

function Dock() {
  return (
    <div className="flex h-[23px] items-end justify-center bg-linear-to-r from-[#06121d] via-[#0a2436] to-[#07131f]">
      <div className="flex h-[21px] items-start gap-1 rounded-t-[3px] bg-[#3f556b] px-[3px] pt-[2px]">
        <svg className="h-[19px] w-3" viewBox="0 0 12 19"><path d="M0 0h12v12H0z" fill="#e8f3fb" /><path d="M0 0h7C5.500 3 5 5 5 7h2l.5 5H0z" fill="#27a5f2" /><path d="M3 3v1.500M9 3v1.500M2.500 8c2 2 5 2 7 0" fill="none" stroke="#10304a" /><circle cx="6" cy="17" r="1.300" /></svg>
        <svg className="size-3" viewBox="0 0 12 12"><circle cx="6" cy="6" r="6" fill="#a5abb0" /><path d="M9.500 2.500C6 3 4.500 5 3.500 7L5 8.500c2-1 4-2.500 4.500-6zM3 6 2 7.500M6 9l-1.500 1" fill="#30363c" stroke="#30363c" strokeWidth=".7" /></svg>
        <svg className="h-3 w-[13px]" viewBox="0 0 13 12"><rect width="12" height="12" rx="2" fill="#777" /><circle cx="6" cy="6" r="4" fill="none" stroke="#222" strokeWidth="1.500" /><path d="M6 6 3 3.500M6 6l3.500.5M6 6 4 9" stroke="#222" /><circle cx="10.500" cy="2" r="2.300" fill="#f23a3d" /></svg>
        <svg className="size-3" viewBox="0 0 12 12"><rect width="12" height="12" rx="1" fill="#17251f" /><path d="M1 6h2l1-2 1 4 1-3 1 2h1l1-3 1 2h1" fill="none" stroke="#35603f" strokeWidth=".8" /></svg>
        <div className="flex h-[19px] w-3 flex-col items-center"><span className="h-3 text-[6px] font-bold leading-3 text-white">Live</span><span className="mt-[3px] size-[3px] rounded-full bg-black" /></div>
        <svg className="size-3" viewBox="0 0 12 12"><circle cx="6" cy="6" r="5.900" fill="#111" /><circle cx="6" cy="6" r="4.200" fill="none" stroke="#fff" /><path d="M3.500 4.500h5M3 6h6M3.500 7.500h5" stroke="#fff" strokeWidth=".9" /></svg>
        <svg className="ml-px size-3" viewBox="0 0 12 12"><rect width="12" height="12" rx="2" fill="#1567a7" /><circle cx="6" cy="6" r="3" fill="none" stroke="#e6f5ff" strokeWidth="2" strokeDasharray="1.700 .700" /><circle cx="6" cy="6" r="1.600" fill="#e6f5ff" /></svg>
        <span className="ml-[2px] h-4 w-px bg-[#1e2e3d]" />
        <svg className="h-[19px] w-3" viewBox="0 0 12 19"><circle cx="6" cy="6" r="5.700" fill="#286bd0" /><path d="M3 5c2-4 7-2 7 2-2 2-5 0-3-2-3-1-4 3-1 5-3 0-4-3-3-5z" fill="#162f51" /><circle cx="6" cy="17" r="1.300" /></svg>
        <svg className="size-3" viewBox="0 0 12 12"><circle cx="6" cy="6" r="5.800" fill="#3c9cf0" stroke="#d8e8f5" strokeWidth=".6" /><path d="M9.500 2.500 7 7 2.500 9.500 5 5z" fill="#fff" /><path d="M9.500 2.500 7 7 5 5z" fill="#ee4a44" /></svg>
        <svg className="size-3" viewBox="0 0 12 12"><path d="M0 1h12v11H0z" fill="#1b1b1b" /><path d="M1 6h10v5H1z" fill="#eee" /><path d="M3.500 6v4M6 6v3M8.500 6v4" stroke="#111" strokeWidth="1.300" /></svg>
        <span className="ml-px h-4 w-px bg-[#1e2e3d]" />
        <svg className="ml-px mr-px h-[14px] w-3" viewBox="0 0 12 14"><path d="M1 1.500h10L9.700 13H2.300z" fill="#c7ced4" stroke="#e7ecf0" /><path d="M4 3l.5 8M6 3v8M8 3l-.5 8" stroke="#8d979f" strokeWidth=".8" /></svg>
      </div>
    </div>
  );
}

export default function App() {
  return (
    <div className="min-h-screen bg-black px-16 font-['Open_Sans','Liberation_Sans',sans-serif]">
      <div className="flex min-h-screen flex-col bg-[#081521]">
        <MenuBar />
        <main className="flex flex-1 flex-col overflow-hidden rounded-b-[4px] bg-[#e7e7e7]">
          <div className="relative flex h-5 items-center justify-center border-b border-[#bdbdbd] bg-linear-to-b from-[#e6e6e6] to-[#cfcfcf] font-['Inter','Liberation_Sans',sans-serif] text-[12px] text-[#4a4a4a]">
            <div className="absolute inset-y-0 left-[7px] flex items-center gap-[7px]">
              <button type="button" aria-label="Close" className="flex size-[11px] items-center justify-center rounded-full bg-[#ee5055]"><span className="size-[3px] rounded-full bg-[#5d0a10]" /></button>
              <button type="button" aria-label="Minimise" className="size-[11px] rounded-full bg-[#f5b72f]" />
              <button type="button" aria-label="Zoom" className="size-[11px] rounded-full bg-[#38d53e]" />
            </div>
            <h1>Untitled</h1>
          </div>
          <Transport />
          <Arrangement />
          <section aria-label="Clip view" className="ml-[7px] mr-[6px] mt-[6px] flex h-[145px] rounded-[3px] bg-[#c0c0c0] pb-[2px] pl-[2px] pr-[3px] pt-[3px] text-[8px] leading-none text-[#1a1a1a]">
            <ClipBox />
            <div className="w-px shrink-0" />
            <SampleBox />
            <div className="w-1 shrink-0" />
            <WaveView />
          </section>
          <StatusBar />
        </main>
        <Dock />
      </div>
    </div>
  );
}
